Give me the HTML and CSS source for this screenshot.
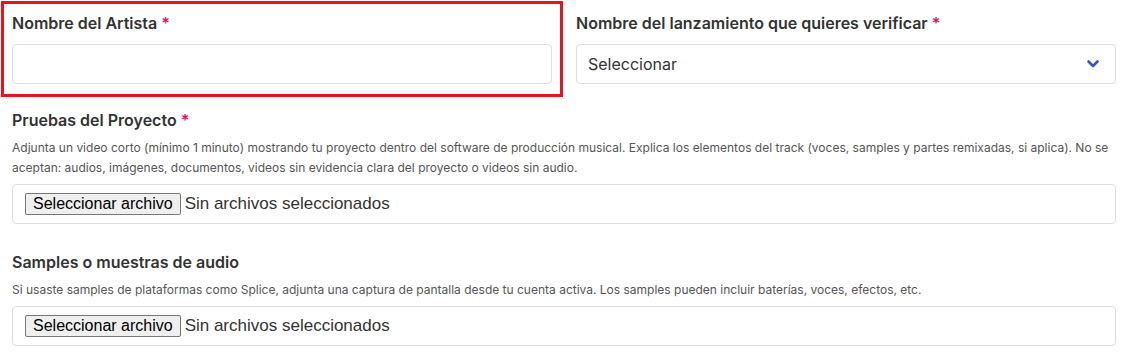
FILE: index.html
```html
<!DOCTYPE html>
<html lang="es">
    <head>
        <meta charset="UTF-8">
        <meta name="viewport" content="width=device-width, initial-scale=1.0">
        <title>Verificar lanzamiento</title>
        <link rel="stylesheet" href="styles.css">
    </head>
    <body>
        <form id="verifyForm" class="form">
            <div class="row">
                <div class="field highlight">
                    <label for="artistField" class="field-label">Nombre del Artista <span class="req">*</span></label>
                    <input type="text" id="artistField" name="artist" class="text-input">
                </div>
                <div class="field">
                    <label for="releaseField" class="field-label">Nombre del lanzamiento que quieres verificar <span class="req">*</span></label>
                    <div class="select-wrap">
                        <select id="releaseField" name="release" class="select-input">
                            <option>Seleccionar</option>
                        </select>
                        <svg class="chevron" width="12" height="8" viewBox="0 0 12 8">
                            <path d="M1.5 1.5 L6 6 L10.5 1.5" fill="none" stroke="#3f51c6" stroke-width="2.6" stroke-linecap="round" stroke-linejoin="round"/>
                        </svg>
                    </div>
                </div>
            </div>

            <div class="field">
                <span class="field-label">Pruebas del Proyecto <span class="req">*</span></span>
                <p class="help">Adjunta un video corto (mínimo 1 minuto) mostrando tu proyecto dentro del software de producción musical. Explica los elementos del track (voces, samples y partes remixadas, si aplica). No se aceptan: audios, imágenes, documentos, videos sin evidencia clara del proyecto o videos sin audio.</p>
                <label class="file-box">
                    <input type="file" name="proof" class="file-hidden">
                    <span class="file-btn">Seleccionar archivo</span>
                    <span class="file-name">Sin archivos seleccionados</span>
                </label>
            </div>

            <div class="field">
                <span class="field-label">Samples o muestras de audio</span>
                <p class="help">Si usaste samples de plataformas como Splice, adjunta una captura de pantalla desde tu cuenta activa. Los samples pueden incluir baterías, voces, efectos, etc.</p>
                <label class="file-box">
                    <input type="file" name="samples" class="file-hidden">
                    <span class="file-btn">Seleccionar archivo</span>
                    <span class="file-name">Sin archivos seleccionados</span>
                </label>
            </div>
        </form>
    </body>
</html>
```

FILE: styles.css
```css
body {
    font-family: Inter, "Liberation Sans", sans-serif;
    background-color: #fff;
    color: #333;
    margin: 0;
    padding: 12px 20px 0 12px;
}

.form {
    display: flex;
    flex-direction: column;
    gap: 27px;
}

.row {
    display: grid;
    grid-template-columns: 540px 540px;
    column-gap: 24px;
    margin-bottom: -4px;
}

.field {
    display: flex;
    flex-direction: column;
}

.highlight {
    outline: 3px solid #e3161e;
    outline-offset: 8px;
    padding-bottom: 2px;
}

.field-label {
    display: block;
    font-size: 16px;
    font-weight: 600;
    line-height: 22px;
    color: #333;
    margin-bottom: 10px;
}

.req {
    color: #e3106e;
}

.help {
    font-size: 12px;
    line-height: 20px;
    color: #555;
    margin: -3px 0 6px 0;
}

.text-input,
.select-input {
    width: 100%;
    height: 40px;
    border: 1px solid #ddd;
    border-radius: 4px;
    box-sizing: border-box;
    background: #fff;
    font-family: Inter, sans-serif;
    font-size: 16px;
    color: #333;
}

.select-wrap {
    position: relative;
}

.select-input {
    appearance: none;
    padding: 0 11px;
}

.chevron {
    position: absolute;
    right: 17px;
    top: 16px;
    pointer-events: none;
}

.file-box {
    display: flex;
    align-items: center;
    height: 40px;
    padding: 0 12px;
    border: 1px solid #ddd;
    border-radius: 4px;
    box-sizing: border-box;
    font-family: "Liberation Sans", Arial, sans-serif;
    font-size: 16px;
    color: #333;
    cursor: pointer;
}

.file-hidden {
    display: none;
}

.file-btn {
    background-color: #efefef;
    border: 1px solid #767676;
    border-radius: 2px;
    color: #000;
    padding: 1px 7px;
    line-height: 18px;
    margin-right: 4px;
}

.file-name {
    font-size: 17px;
}
```
